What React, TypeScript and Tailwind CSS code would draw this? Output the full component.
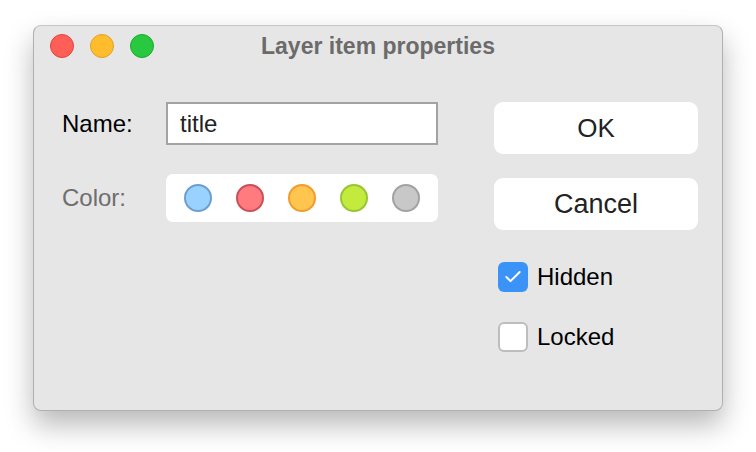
import { Check } from 'lucide-react'

const swatches = [
  { fill: 'bg-[#9ad2ff]', ring: 'border-[#6c9fcf]' },
  { fill: 'bg-[#ff7b7e]', ring: 'border-[#c9505a]' },
  { fill: 'bg-[#ffc54e]', ring: 'border-[#f19d2c]' },
  { fill: 'bg-[#c2eb3e]', ring: 'border-[#97c534]' },
  { fill: 'bg-[#c8c8c8]', ring: 'border-[#a2a2a2]' },
]

function CheckRow({ label, checked }: { label: string; checked?: boolean }) {
  return (
    <div className="flex items-center gap-[9px] pl-[4px]">
      {checked ? (
        <div className="w-[30px] h-[30px] rounded-[6px] bg-[#3b93f7] flex items-center justify-center">
          <Check size={20} strokeWidth={2.4} className="text-white" />
        </div>
      ) : (
        <div className="w-[30px] h-[30px] rounded-[6px] bg-white border-2 border-[#bdbdbd]" />
      )}
      <span className="text-[24px] text-black leading-none">{label}</span>
    </div>
  )
}

export default function App() {
  return (
    <div className="w-[756px] h-[452px] bg-white pl-[33px] pt-[25px] [font-family:'Liberation_Sans',Arial,sans-serif]">
      <div className="w-[690px] h-[386px] rounded-[8px] bg-[#e6e6e6] border border-[#b0b0b0] border-t-[#c6c6c6] shadow-[0_14px_28px_rgba(0,0,0,0.28)] flex flex-col">
        <div className="h-[40px] grid grid-cols-[1fr_auto_1fr] items-center px-[16px]">
          <div className="flex gap-[16px]">
            <div className="w-[24px] h-[24px] rounded-full bg-[#ff5f57] border border-[#e0443e]" />
            <div className="w-[24px] h-[24px] rounded-full bg-[#ffbd2e] border border-[#dea123]" />
            <div className="w-[24px] h-[24px] rounded-full bg-[#28c940] border border-[#1aab29]" />
          </div>
          <div className="text-[23px] font-bold text-[#6b6b6b]">Layer item properties</div>
          <div />
        </div>
        <div className="flex pl-[28px] pr-[23px] pt-[36px]">
          <div className="flex flex-col w-[376px]">
            <div className="flex items-center h-[43px]">
              <span className="w-[104px] text-[24px] text-black">Name:</span>
              <div className="w-[272px] h-[43px] bg-white border-2 border-[#a3a3a3] flex items-center pl-[12px] text-[24px] text-[#222]">title</div>
            </div>
            <div className="flex items-center mt-[29px]">
              <span className="w-[104px] text-[24px] text-[#6e6e6e]">Color:</span>
              <div className="w-[272px] h-[48px] rounded-[7px] bg-white flex items-center pl-[18px] gap-[24px]">
                {swatches.map((s, i) => (
                  <div key={i} className={`w-[28px] h-[28px] rounded-full border-2 ${s.fill} ${s.ring}`} />
                ))}
              </div>
            </div>
          </div>
          <div className="ml-[56px] w-[204px] flex flex-col">
            <button className="h-[52px] rounded-[9px] bg-white text-[26px] text-[#222]">OK</button>
            <button className="mt-[24px] h-[52px] rounded-[9px] bg-white text-[27px] text-[#222]">Cancel</button>
            <div className="mt-[32px]"><CheckRow label="Hidden" checked /></div>
            <div className="mt-[30px]"><CheckRow label="Locked" /></div>
          </div>
        </div>
      </div>
    </div>
  )
}
